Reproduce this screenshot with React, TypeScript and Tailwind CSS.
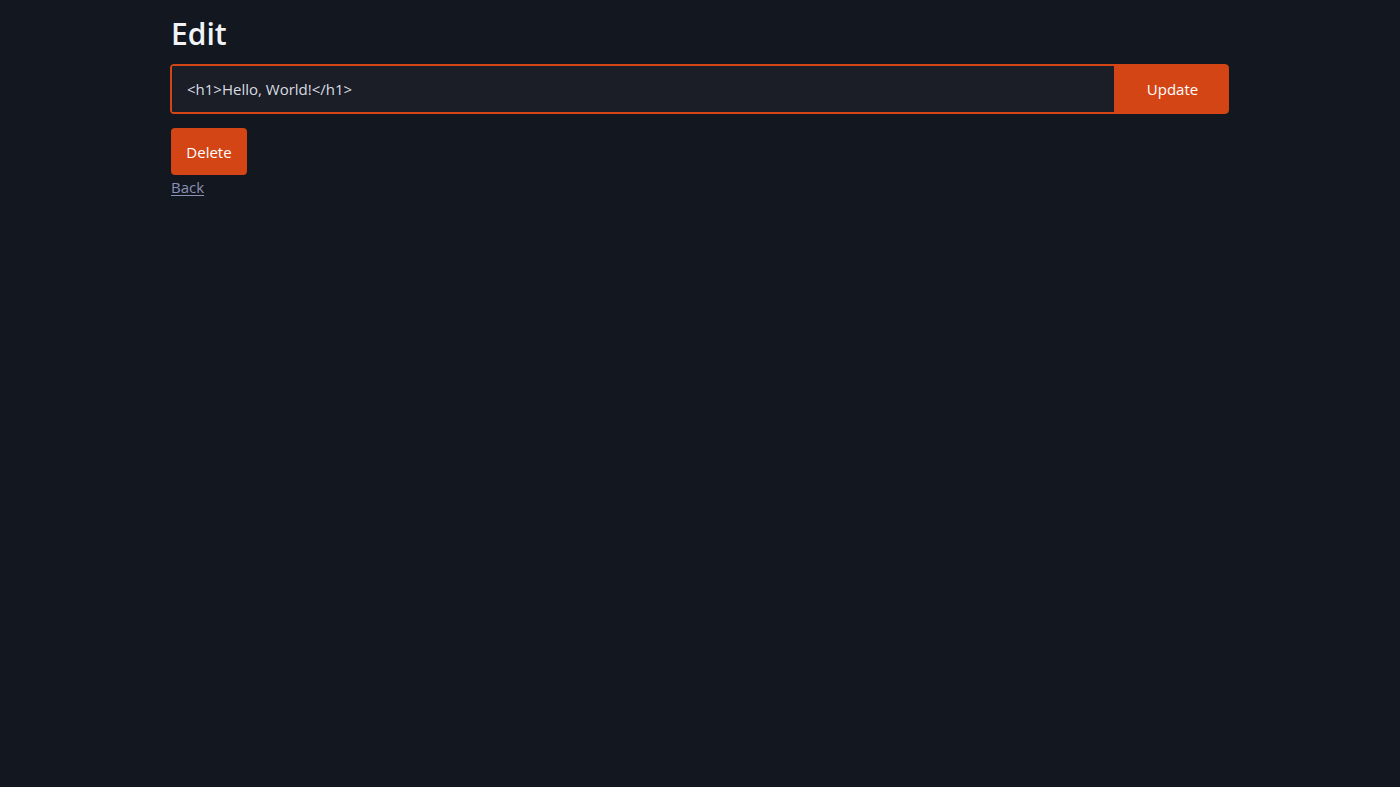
import React, { useState } from 'react';

const App = () => {
  const [value, setValue] = useState('<h1>Hello, World!</h1>');

  return (
    <div className="min-h-screen w-full bg-[#131720] text-gray-100" style={{ fontFamily: '"Open Sans", "Noto Sans", sans-serif' }}>
      <div className="w-[1058px] mx-auto pt-[14px]">
        <h1 className="text-[30px] font-semibold leading-[40px] text-[#f1f3f7] mb-[10px]">Edit</h1>

        <div className="flex h-[50px] w-[1059px] -ml-[1px] rounded-[4px] overflow-hidden">
          <input
            value={value}
            onChange={(e) => setValue(e.target.value)}
            className="flex-1 min-w-0 h-full bg-[#1b1e26] border-2 border-[#d44516] rounded-l-[3px] px-[15px] text-[15px] text-[#d8dbe2] outline-none"
          />
          <button className="w-[113px] shrink-0 h-full bg-[#d44516] text-white text-[15px] rounded-r-[4px]">Update</button>
        </div>

        <button className="mt-[14px] w-[76px] h-[47px] bg-[#d44516] text-white text-[15px] leading-[49px] rounded-[4px] block">Delete</button>
        <a href="#" className="block text-[15px] leading-[22px] text-[#8b91b4] underline underline-offset-2 w-fit mt-[1px]">Back</a>
      </div>
    </div>
  );
};

export default App;
